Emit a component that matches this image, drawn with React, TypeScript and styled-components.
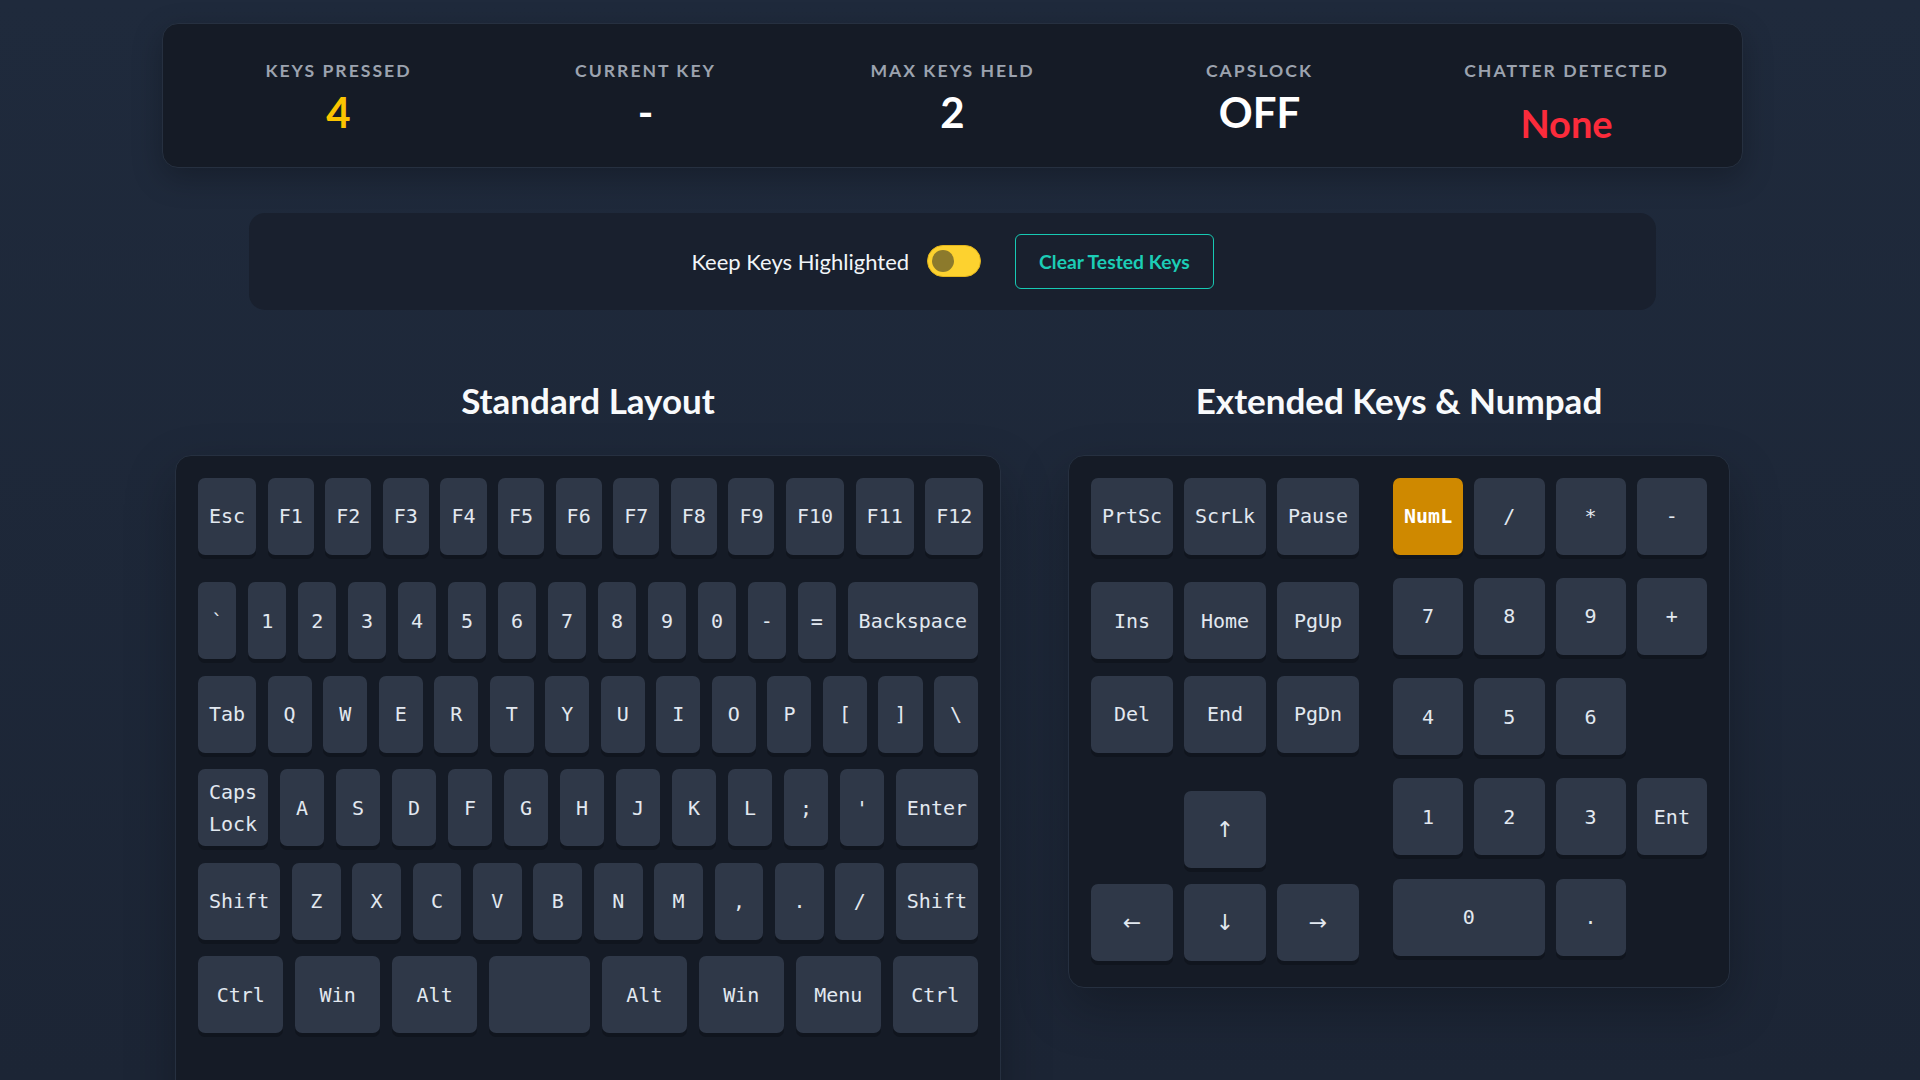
import styled, { createGlobalStyle, css } from 'styled-components';

const GlobalStyle = createGlobalStyle`
  html, body {
    margin: 0;
    padding: 0;
  }
  body {
    background: linear-gradient(180deg, #1f2a3c 0%, #1c2535 100%) fixed;
    background-color: #1e283a;
    color: #f1f5f9;
    font-family: Lato, 'Noto Sans', sans-serif;
  }
  * {
    box-sizing: border-box;
  }
`;

type KeyDef = { label: string; grow?: number };

const k = (...labels: string[]): KeyDef[] => labels.map((label) => ({ label }));

const mainRows: KeyDef[][] = [
  k('Esc', 'F1', 'F2', 'F3', 'F4', 'F5', 'F6', 'F7', 'F8', 'F9', 'F10', 'F11', 'F12'),
  k('`', '1', '2', '3', '4', '5', '6', '7', '8', '9', '0', '-', '=', 'Backspace'),
  k('Tab', 'Q', 'W', 'E', 'R', 'T', 'Y', 'U', 'I', 'O', 'P', '[', ']', '\\'),
  k('Caps Lock', 'A', 'S', 'D', 'F', 'G', 'H', 'J', 'K', 'L', ';', "'", 'Enter'),
  k('Shift', 'Z', 'X', 'C', 'V', 'B', 'N', 'M', ',', '.', '/', 'Shift'),
  [
    ...k('Ctrl', 'Win', 'Alt'),
    { label: '', grow: 1.25 },
    ...k('Alt', 'Win', 'Menu', 'Ctrl'),
  ],
];

const navRows = [
  { keys: ['PrtSc', 'ScrLk', 'Pause'], after: 11 },
  { keys: ['Ins', 'Home', 'PgUp'], after: 0 },
  { keys: ['Del', 'End', 'PgDn'], after: 21.5 },
  { keys: ['↑'], after: 0 },
  { keys: ['←', '↓', '→'], after: 0 },
];

const arrows = ['↑', '←', '↓', '→'];

const numpad: { label: string; col?: number; span?: number; active?: boolean }[] = [
  { label: 'NumL', active: true },
  { label: '/' },
  { label: '*' },
  { label: '-' },
  { label: '7' },
  { label: '8' },
  { label: '9' },
  { label: '+' },
  { label: '4' },
  { label: '5' },
  { label: '6' },
  { label: '1', col: 1 },
  { label: '2' },
  { label: '3' },
  { label: 'Ent' },
  { label: '0', span: 2 },
  { label: '.' },
];

const stats = [
  { label: 'Keys Pressed', value: '4', tone: 'yellow' },
  { label: 'Current Key', value: '-', tone: 'white' },
  { label: 'Max Keys Held', value: '2', tone: 'white' },
  { label: 'Capslock', value: 'OFF', tone: 'white' },
  { label: 'Chatter Detected', value: 'None', tone: 'red' },
] as const;

function App() {
  return (
    <Page>
      <GlobalStyle />
      <StatsPanel>
        {stats.map((s) => (
          <Stat key={s.label}>
            <StatLabel>{s.label}</StatLabel>
            <StatValue $tone={s.tone}>{s.value}</StatValue>
          </Stat>
        ))}
      </StatsPanel>

      <Controls>
        <ToggleLabel>Keep Keys Highlighted</ToggleLabel>
        <Switch role="switch" aria-checked="true" />
        <ClearButton>Clear Tested Keys</ClearButton>
      </Controls>

      <Boards>
        <Section>
          <SectionTitle>Standard Layout</SectionTitle>
          <MainBoard>
            {mainRows.map((row, i) => (
              <KeyRow key={i} $after={i === 0 ? 11 : 0}>
                {row.map((key, j) => (
                  <Key key={j} $grow={key.grow ?? 1}>
                    {key.label}
                  </Key>
                ))}
              </KeyRow>
            ))}
          </MainBoard>
        </Section>

        <Section>
          <SectionTitle>Extended Keys &amp; Numpad</SectionTitle>
          <ExtBoard>
            <NavCluster>
              {navRows.map((row, i) => (
                <NavRow key={i} $after={row.after}>
                  {row.keys.map((label) => (
                    <NavKey key={label} $arrow={arrows.includes(label)}>
                      {label}
                    </NavKey>
                  ))}
                </NavRow>
              ))}
            </NavCluster>
            <Numpad>
              {numpad.map((key) => (
                <PadKey
                  key={key.label}
                  $active={key.active}
                  $col={key.col}
                  $span={key.span}
                >
                  {key.label}
                </PadKey>
              ))}
            </Numpad>
          </ExtBoard>
        </Section>
      </Boards>
    </Page>
  );
}

// the reference was taken with a 15px scrollbar on the right
const Page = styled.div`
  min-height: 1200px;
  padding: 23px 15px 0 0;
`;

const StatsPanel = styled.div`
  display: grid;
  grid-template-columns: repeat(5, 1fr);
  align-items: start;
  width: 1581px;
  margin: 0 auto;
  padding: 35px 22px 20px;
  background: #151b26;
  border: 1px solid #263040;
  border-radius: 16px;
  box-shadow: 0 10px 30px rgba(0, 0, 0, 0.25);
`;

const Stat = styled.div`
  display: flex;
  flex-direction: column;
  align-items: center;
`;

const StatLabel = styled.div`
  font-size: 17.6px;
  line-height: 24px;
  font-weight: 700;
  letter-spacing: 2px;
  text-transform: uppercase;
  color: #9ca3af;
`;

const toneColor = {
  yellow: '#fbc400',
  white: '#ffffff',
  red: '#fb2b3b',
};

const StatValue = styled.div<{ $tone: keyof typeof toneColor }>`
  margin-top: 3.5px;
  font-size: 42px;
  line-height: 1.2;
  font-weight: 700;
  color: ${(p) => toneColor[p.$tone]};
  ${(p) =>
    p.$tone === 'red' &&
    css`
      margin-top: 18px;
      font-size: 38px;
    `}
`;

const Controls = styled.div`
  display: flex;
  align-items: center;
  justify-content: center;
  gap: 18px;
  width: 1407px;
  height: 97px;
  margin: 45px auto 0;
  background: #19202e;
  border-radius: 16px;
`;

const ToggleLabel = styled.span`
  font-size: 22px;
  color: #f1f5f9;
`;

const Switch = styled.span`
  position: relative;
  display: block;
  width: 54px;
  height: 32px;
  border-radius: 16px;
  background: #fdd22f;
  border: 1px solid #e2b41c;

  &::after {
    content: '';
    position: absolute;
    left: 4px;
    top: 4px;
    width: 22px;
    height: 22px;
    border-radius: 50%;
    background: #8c7a2c;
  }
`;

const ClearButton = styled.button`
  height: 55px;
  margin-left: 16px;
  padding: 0 23px;
  background: transparent;
  border: 1px solid #17c9b3;
  border-radius: 6px;
  color: #1ccdb6;
  font-family: Lato, 'Noto Sans', sans-serif;
  font-size: 19.3px;
  font-weight: 700;
  cursor: pointer;
`;

const Boards = styled.div`
  display: flex;
  justify-content: center;
  align-items: flex-start;
  gap: 67px;
  margin-top: 69.5px;
`;

const Section = styled.section`
  display: flex;
  flex-direction: column;
  align-items: center;
`;

const SectionTitle = styled.h2`
  margin: 0 0 33.5px;
  font-size: 35px;
  line-height: 1.2;
  font-weight: 700;
  color: #f8fafc;
`;

const Panel = styled.div`
  background: #151b26;
  border: 1px solid #263040;
  border-radius: 16px;
  box-shadow: 0 20px 50px rgba(0, 0, 0, 0.25);
`;

const MainBoard = styled(Panel)`
  display: flex;
  flex-direction: column;
  gap: 16.5px;
  width: 826px;
  padding: 22px 22px 80px;
`;

const KeyRow = styled.div<{ $after: number }>`
  display: flex;
  gap: 11.5px;
  margin-bottom: ${(p) => p.$after}px;
`;

const keyBase = css`
  display: flex;
  align-items: center;
  justify-content: center;
  height: 77px;
  padding: 0 11px;
  border-radius: 7px;
  background: #2f3848;
  color: #e2e8f0;
  font-family: 'DejaVu Sans Mono', 'Liberation Mono', monospace;
  font-size: 20px;
  line-height: 1.6;
  text-align: center;
  box-shadow: 0 4px 0 #10151e;
`;

const Key = styled.div<{ $grow: number }>`
  ${keyBase};
  flex: ${(p) => p.$grow} 1 0;
`;

const ExtBoard = styled(Panel)`
  display: flex;
  align-items: flex-start;
  gap: 34px;
  width: 662px;
  padding: 22px 22px 26px;
`;

const NavCluster = styled.div`
  display: flex;
  flex-direction: column;
  gap: 16.5px;
  width: 268px;
`;

const NavRow = styled.div<{ $after: number }>`
  display: flex;
  justify-content: center;
  gap: 11px;
  margin-bottom: ${(p) => p.$after}px;
`;

const NavKey = styled.div<{ $arrow?: boolean }>`
  ${keyBase};
  width: 82px;
  ${(p) =>
    p.$arrow &&
    css`
      font-family: 'DejaVu Sans', sans-serif;
      font-size: 22px;
    `}
`;

const Numpad = styled.div`
  display: grid;
  grid-template-columns: repeat(4, 1fr);
  grid-auto-rows: 77px;
  column-gap: 11px;
  row-gap: 23.25px;
  width: 315px;
`;

const PadKey = styled.div<{ $active?: boolean; $col?: number; $span?: number }>`
  ${keyBase};
  ${(p) => p.$col && `grid-column-start: ${p.$col};`}
  ${(p) => p.$span && `grid-column-end: span ${p.$span};`}
  ${(p) =>
    p.$active &&
    css`
      background: #cf8900;
      color: #ffffff;
      font-weight: 700;
    `}
`;

export default App;
